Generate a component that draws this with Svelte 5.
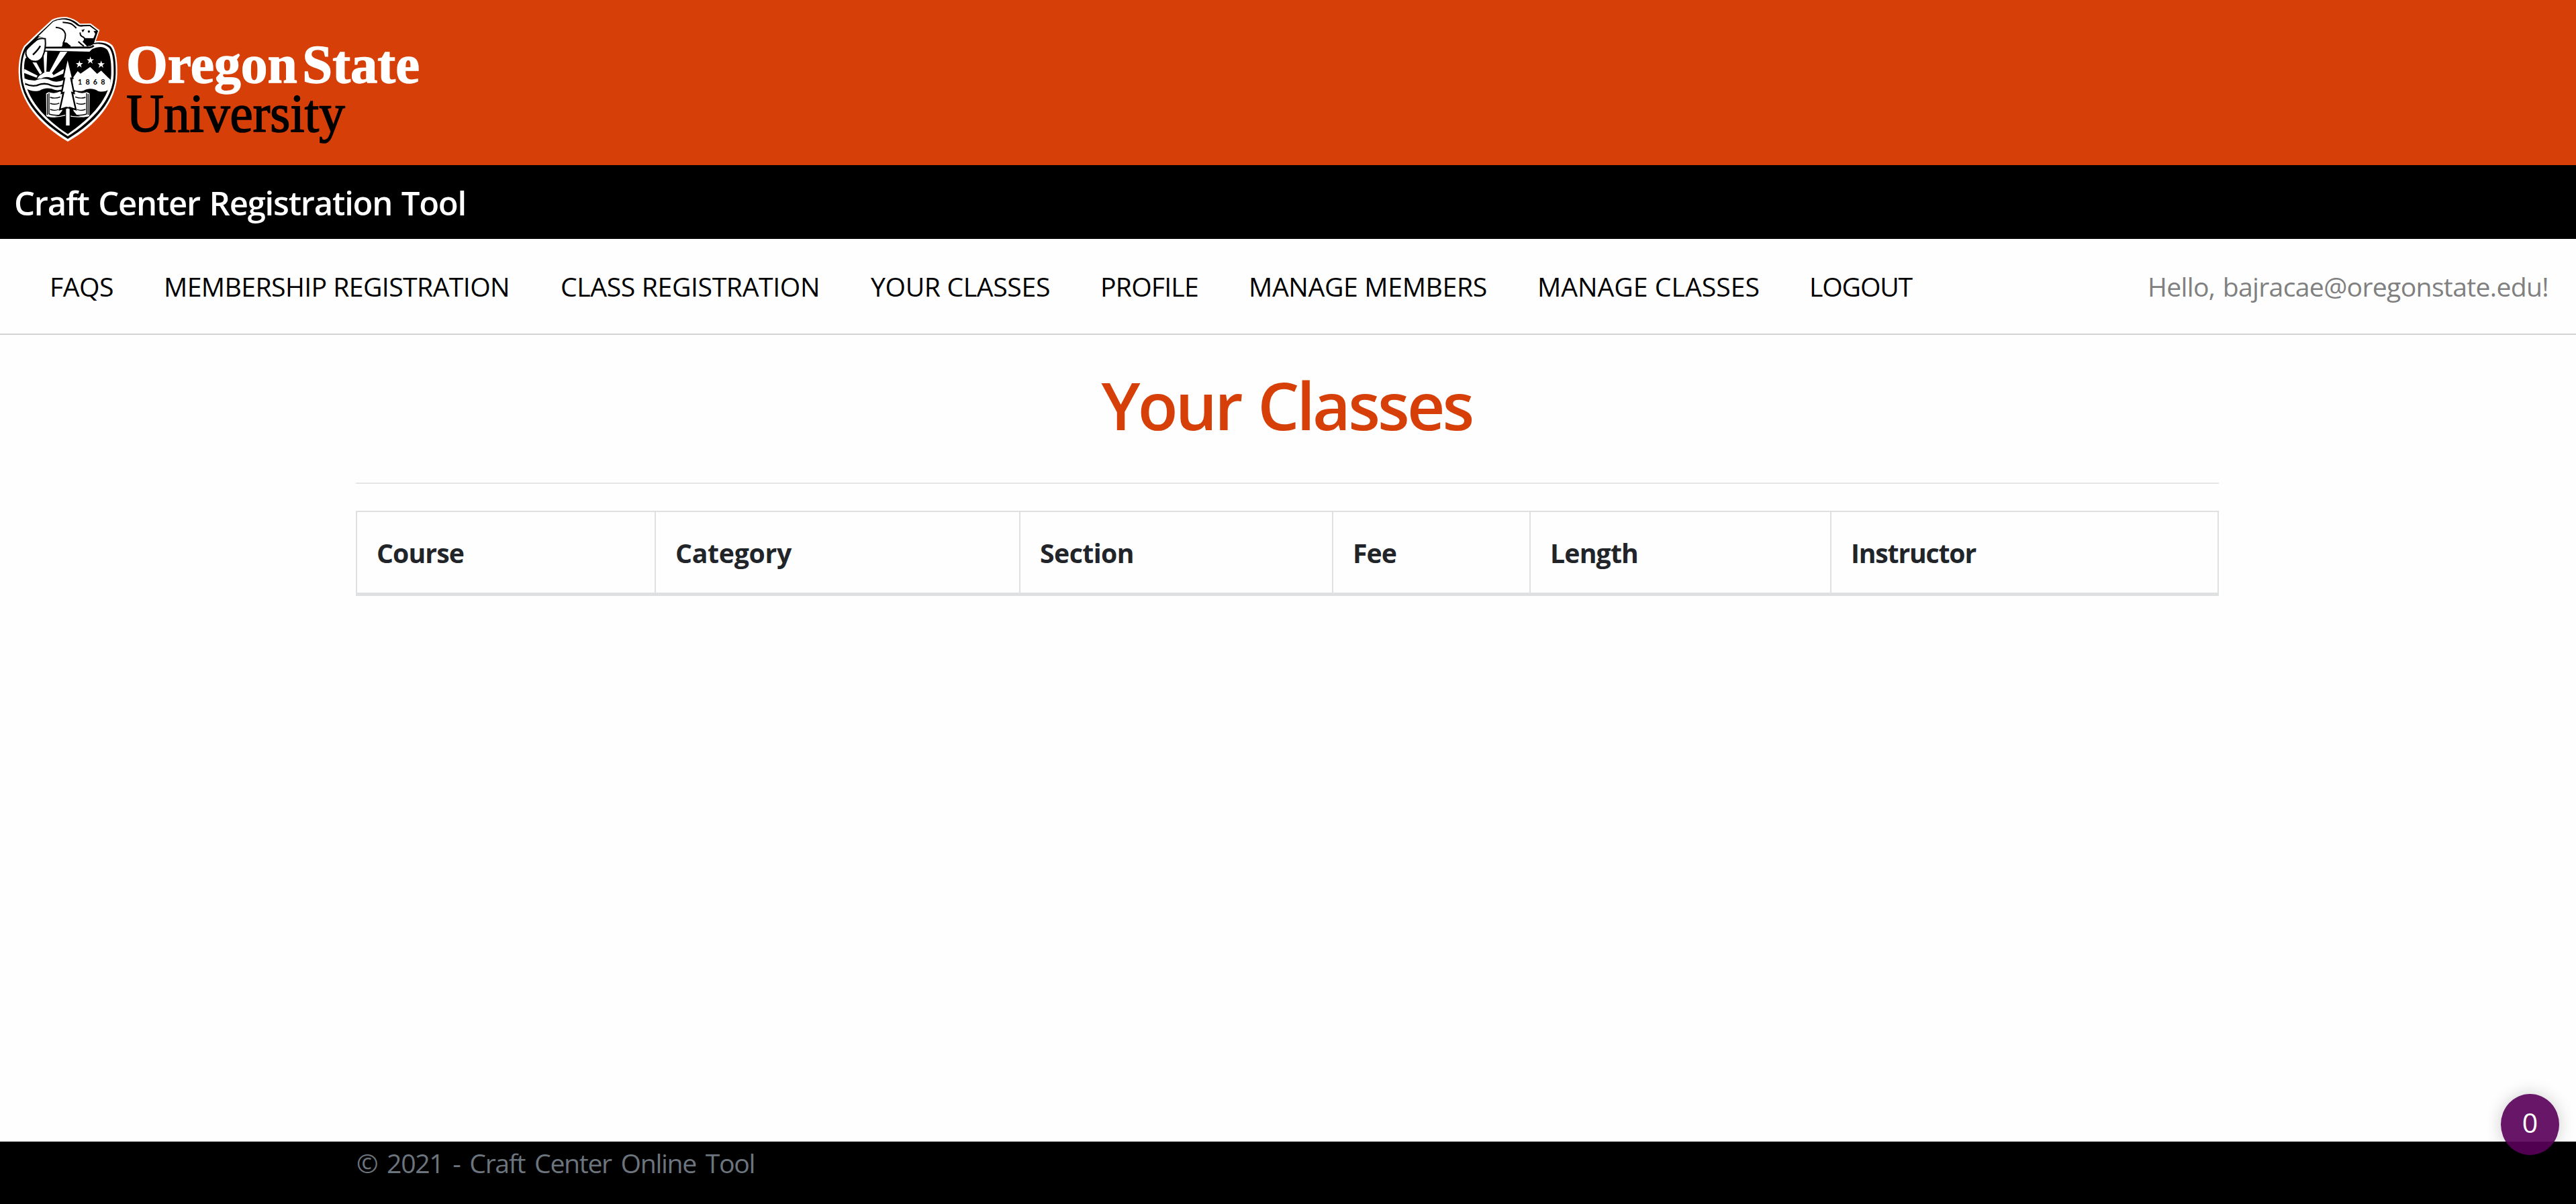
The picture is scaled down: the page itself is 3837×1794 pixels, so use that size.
<script lang="ts">
  const navItems = [
    { label: 'FAQS', width: 96, text: 95 },
    { label: 'MEMBERSHIP REGISTRATION', width: 517, text: 515 },
    { label: 'CLASS REGISTRATION', width: 388, text: 386 },
    { label: 'YOUR CLASSES', width: 268, text: 267 },
    { label: 'PROFILE', width: 147, text: 146 },
    { label: 'MANAGE MEMBERS', width: 356, text: 355 },
    { label: 'MANAGE CLASSES', width: 331, text: 331 },
    { label: 'LOGOUT', width: 153, text: 153 }
  ];

  const columns = [
    { label: 'Course', text: 130 },
    { label: 'Category', text: 173 },
    { label: 'Section', text: 140 },
    { label: 'Fee', text: 65 },
    { label: 'Length', text: 131 },
    { label: 'Instructor', text: 186 }
  ];

  // Tracks a single-line label so that it fills the given width.
  function fit(node: HTMLElement, width: number) {
    const natural = node.getBoundingClientRect().width;
    const count = (node.textContent ?? '').length;
    node.style.letterSpacing = `${(width - natural) / count}px`;
  }
</script>

<div class="page">
  <header class="brand">
    <svg class="logo" viewBox="0 0 1950 720" role="img" aria-label="Oregon State University">
      <!-- shield layers -->
      <path fill="#fff" d="M303 633C180 560 84 455 83 325C82 275 92 230 108 205L165 150L232 88Q262 73 298 76Q330 82 358 106L405 105L445 135L428 184Q475 176 502 202C522 230 525 285 524 330C522 455 430 560 303 633Z" />
      <path fill="#000" d="M303 621C186 550 91 450 90 325C89 278 97 236 113 210L170 155L236 94Q264 80 297 82Q328 87 355 112L403 111L438 138L420 192Q468 184 495 208C515 235 518 285 517 330C515 450 424 548 303 621Z" />
      <path fill="#fff" d="M303 609C193 540 100 443 98 325C97 285 102 248 117 222L174 166L203 168L205 208L397 209L418 197Q462 190 488 214C506 238 509 285 508 330C506 442 418 537 303 609Z" />
      <path fill="#000" d="M303 599C204 535 112 440 108 330Q106 285 113 262L160 225L400 231L412 219Q455 200 479 222C495 245 498 285 497 330C495 435 410 526 303 599Z" />

      <!-- sun and rays -->
      <g fill="#fff">
        <path d="M166 352Q174 337 188 331Q202 318 220 321Q234 325 239 336L244 343Q236 351 226 347Q202 339 182 352Z" />
        <path d="M194 231H211L207 323H198Z" />
        <path d="M269 231H301L232 328L219 325Z" />
        <path d="M145 278L163 280L188 326L179 333Z" />
        <path d="M109 308L168 338L163 347L108 326Z" />
        <path d="M284 309L290 326L243 345L239 336Z" />
      </g>

      <!-- water -->
      <path fill="#fff" d="M108 350Q132 361 157 360C184 351 205 348 228 360Q252 371 285 358V396Q266 406 246 402C219 389 194 394 177 405C150 411 136 406 120 397Z" />
      <path fill="none" stroke="#000" stroke-width="7" d="M112 374Q137 387 164 382C185 373 208 371 230 382Q255 391 282 381" />

      <!-- mountains and lake -->
      <path fill="#fff" d="M324 350L347 318L360 329L373 320L403 299L434 330L452 316L479 343L494 356Q494 380 484 402Q463 414 438 407C414 393 392 395 374 405Q350 412 325 400Z" />
      <g fill="#fff">
        <path id="star" d="M355 270L359 282L371 282L361 290L365 302L355 294L344 302L348 290L339 282L351 282Z" />
        <use href="#star" x="49" y="-17" />
        <use href="#star" x="97" y="1" />
      </g>
      <text class="year" x="348" y="377" textLength="121">1868</text>

      <!-- open book -->
      <path fill="#fff" d="M206 418L218 412Q243 422 268 409L278 414V495L263 514Q238 530 207 519Z" />
      <path fill="#fff" d="M400 418L388 412Q363 422 338 409L328 414V495L343 514Q368 530 399 519Z" />
      <g fill="none" stroke="#000" stroke-width="4">
        <path d="M212 420V514M394 420V514M219 416V510M387 416V510" />
        <path d="M224 435Q246 443 270 433M224 462Q246 470 265 461M224 489Q246 497 262 489M219 510Q255 522 292 507" />
        <path d="M382 435Q360 443 336 433M382 462Q360 470 341 461M382 489Q360 497 344 489M387 510Q351 522 314 507" />
      </g>
      <path fill="none" stroke="#fff" stroke-width="4" d="M210 518Q245 529 294 514Q345 529 397 517" />

      <!-- fir tree -->
      <path fill="#fff" stroke="#000" stroke-width="7" d="M302 254L281 350H288L275 417L284 414L267 490L295 481V562H312V481L339 490L322 414L331 417L317 350H325Z" />
      <path fill="#fff" d="M295 484H311V561H295Z" />
      <path stroke="#000" stroke-width="6" d="M292 485L303 481L314 485" fill="none" />

      <!-- beaver -->
      <path fill="#fff" d="M171 162L238 97Q270 82 304 90Q327 97 345 114Q356 121 373 118L401 117L431 139L417 172L385 171L382 181L402 208H205L203 170Z" />
      <path fill="none" stroke="#000" stroke-width="6" d="M249 122Q284 124 292 151Q294 169 283 192L298 194L315 208M280 100Q309 102 321 108Q332 116 341 126M359 145Q354 158 374 167Q385 177 373 186L392 205M350 186Q363 198 375 207" />
      <path fill="#000" d="M282 190L300 191L315 211H276ZM364 134L379 130L370 145ZM418 139L438 138L429 157ZM376 170L423 171L418 186L408 178L390 182L401 205L389 207L373 187Z" />
      <circle cx="397" cy="141" r="5" fill="#000" />
      <path fill="none" stroke="#000" stroke-width="8" d="M197 213H400Q411 212 419 204" />
      <path fill="#fff" stroke="#000" stroke-width="6" d="M166 177Q181 169 202 173Q207 217 190 255Q172 283 139 271Q111 257 116 227Q119 216 166 177Z" />
      <path fill="none" stroke="#000" stroke-width="7" d="M180 205Q171 222 147 245" />

      <text class="wordmark state" x="564" y="368" textLength="764" lengthAdjust="spacingAndGlyphs">Oregon</text>
      <text class="wordmark state" x="1351" y="368" textLength="524" lengthAdjust="spacingAndGlyphs">State</text>
      <text class="wordmark univ" x="565" y="587" textLength="976" lengthAdjust="spacingAndGlyphs">University</text>
    </svg>
  </header>

  <div class="titlebar"><span use:fit={673}>Craft Center Registration Tool</span></div>

  <nav class="nav">
    <div class="links">
      {#each navItems as item}
        <a href="#top" style:width="{item.width}px"><span use:fit={item.text}>{item.label}</span></a>
      {/each}
    </div>
    <div class="hello"><span use:fit={597}>Hello, bajracae@oregonstate.edu!</span></div>
  </nav>

  <main>
    <h1><span use:fit={552}>Your Classes</span></h1>
    <hr />
    <div class="table">
      {#each columns as col}
        <div class="cell"><span use:fit={col.text}>{col.label}</span></div>
      {/each}
    </div>
  </main>

  <footer><span use:fit={593}>© 2021 - Craft Center Online Tool</span></footer>

  <div class="counter">0</div>
</div>

<style>
  :global(body) {
    background: #fefefe;
  }
  .page {
    position: relative;
    display: flex;
    flex-direction: column;
    width: 3837px;
    height: 1794px;
    overflow: hidden;
    background: #fefefe;
    color: #212529;
    font-family: 'Open Sans', 'Noto Sans', sans-serif;
    font-size: 39.2px;
    line-height: 60px;
    white-space: nowrap;
  }
  .brand {
    height: 246px;
    background: #d73f09;
  }
  .logo {
    display: block;
    width: 650px;
    height: 240px;
  }
  .year {
    font: 700 32px Lato, sans-serif;
    fill: #000;
  }
  .wordmark {
    font-family: 'Liberation Serif', serif;
    font-size: 244px;
  }
  .state {
    font-weight: 700;
    fill: #fff;
    stroke: #fff;
    stroke-width: 4px;
  }
  .univ {
    fill: #000;
    stroke: #000;
    stroke-width: 5px;
  }
  .titlebar {
    box-sizing: border-box;
    height: 110px;
    padding: 19px 0 0 21px;
    background: #000;
    color: #fff;
    font-size: 49px;
    font-weight: 600;
    line-height: 75px;
    word-spacing: 2px;
  }
  .nav {
    box-sizing: border-box;
    display: flex;
    justify-content: space-between;
    height: 143px;
    padding: 41px 37px 0 74px;
    border-bottom: 2px solid #d2d3d3;
  }
  .links {
    display: flex;
    gap: 74px;
  }
  .links a {
    color: #000;
    text-decoration: none;
  }
  .hello {
    width: 601px;
    color: #808080;
    word-spacing: 2px;
  }
  main {
    flex: 1;
    width: 2775px;
    margin-left: 530px;
  }
  h1 {
    margin: 0;
    padding: 44px 2px 0 0;
    height: 176px;
    color: #d73f09;
    font-size: 98px;
    font-weight: 600;
    line-height: 120px;
    text-align: center;
    word-spacing: 4px;
  }
  hr {
    height: 2px;
    margin: 0 0 40px;
    border: 0;
    background: #e5e5e5;
  }
  .table {
    box-sizing: border-box;
    display: grid;
    grid-template-columns: 443px 543px 466px 294px 448px 577px;
    height: 127px;
    border: 2px solid #dee0e2;
    border-width: 2px 2px 5px;
  }
  .cell {
    padding: 31px 0 0 29px;
    border-left: 2px solid #dee0e2;
    font-weight: 700;
  }
  .cell:first-child {
    border-left: 0;
  }
  footer {
    box-sizing: border-box;
    height: 93px;
    padding: 2px 0 0 531px;
    background: #000;
    color: #6c757d;
    word-spacing: 5px;
  }
  .counter {
    position: absolute;
    left: 3725px;
    top: 1630px;
    width: 87px;
    height: 91px;
    border-radius: 50%;
    background: rgba(89, 0, 89, 0.91);
    box-shadow: 0 0 24px rgba(0, 0, 0, 0.2);
    color: #fff;
    font-size: 41px;
    line-height: 85px;
    text-align: center;
  }
</style>
